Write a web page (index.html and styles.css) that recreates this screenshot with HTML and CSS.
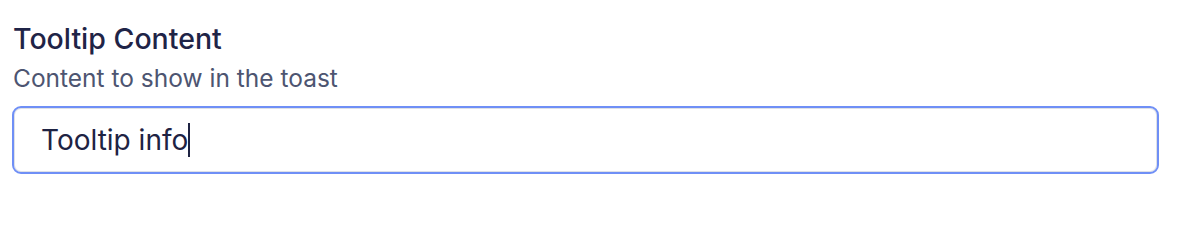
FILE: index.html
```html
<!DOCTYPE html>
<html lang="en">
<head>
<meta charset="utf-8">
<title>Tooltip Content</title>
<link rel="stylesheet" href="styles.css">
</head>
<body>
<div class="field">
  <label class="field-label" for="tooltip">Tooltip Content</label>
  <div class="field-hint">Content to show in the toast</div>
  <div class="input">
    <span class="input-value">Tooltip info</span><span class="caret"></span>
  </div>
</div>
</body>
</html>
```
FILE: styles.css
```css
html, body {
  margin: 0;
  padding: 0;
  background: #ffffff;
}
body {
  font-family: Inter, "Noto Sans", sans-serif;
}
.field {
  display: flex;
  flex-direction: column;
  padding: 21px 23px 0 12px;
}
.field-label {
  font-size: 28.5px;
  font-weight: 500;
  line-height: 36px;
  color: #1f2447;
  padding-left: 1px;
}
.field-hint {
  margin-top: 5px;
  font-size: 24.5px;
  line-height: 32px;
  color: #4d5571;
  padding-left: 1px;
}
.input {
  margin-top: 12px;
  height: 68px;
  box-sizing: border-box;
  border: 2px solid #6f8ff6;
  border-radius: 9px;
  box-shadow: inset 0 0 0 1px #dfe1e6;
  display: flex;
  align-items: center;
  padding-left: 27px;
}
.input-value {
  font-size: 28px;
  color: #1e2343;
}
.caret {
  display: inline-block;
  width: 2px;
  height: 34px;
  background: #1e2343;
  margin-left: 0;
}
```
